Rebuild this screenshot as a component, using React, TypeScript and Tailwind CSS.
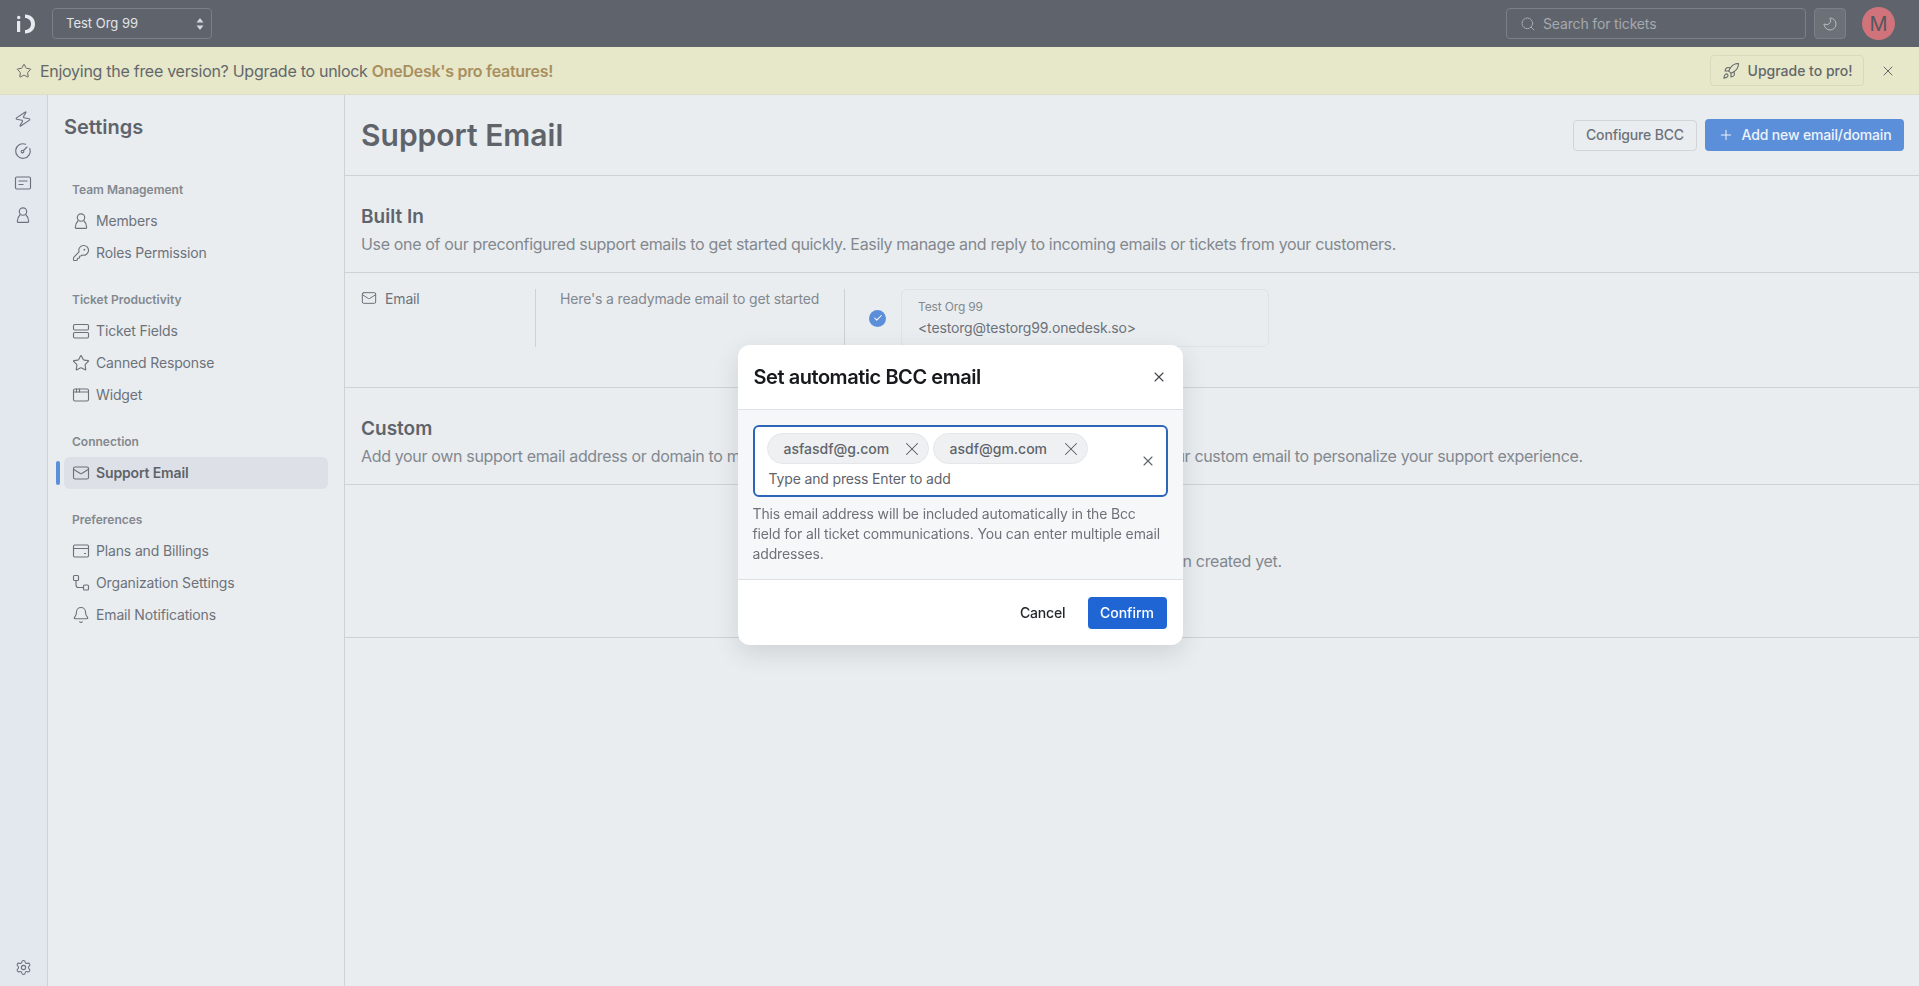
import React from "react";
import {
  AppWindow,
  Bell,
  KeyRound,
  Mail,
  Moon,
  Plus,
  Rocket,
  Search,
  Settings,
  Star,
  X,
  Zap,
  Check,
} from "lucide-react";

type IconProps = { className?: string };

const FieldsIcon = ({ className }: IconProps) => (
  <svg className={className} viewBox="0 0 18 18" fill="none" stroke="currentColor" strokeWidth="1.15">
    <rect x="1.5" y="2.5" width="15" height="5.5" rx="1.2" />
    <rect x="1.5" y="10.5" width="15" height="5.5" rx="1.2" />
  </svg>
);

const TicketIcon = ({ className }: IconProps) => (
  <svg className={className} viewBox="0 0 18 18" fill="none" stroke="currentColor" strokeWidth="1.15">
    <rect x="1.5" y="3" width="15" height="12" rx="1.2" />
    <path d="M4.500 7h9M4.500 10.500h5" />
  </svg>
);

const BillingIcon = ({ className }: IconProps) => (
  <svg className={className} viewBox="0 0 18 18" fill="none" stroke="currentColor" strokeWidth="1.15">
    <rect x="1.5" y="3" width="15" height="12" rx="1.2" />
    <path d="M1.500 6.500h15M12 11.500h2" />
  </svg>
);

const OrgIcon = ({ className }: IconProps) => (
  <svg className={className} viewBox="0 0 18 18" fill="none" stroke="currentColor" strokeWidth="1.15">
    <rect x="1.500" y="1.500" width="5" height="5" rx="1" />
    <rect x="11.500" y="11" width="5" height="5" rx="1" />
    <path d="M4 6.500v4.500a2.500 2.500 0 0 0 2.500 2.500h5" />
  </svg>
);

const PersonIcon = ({ className }: IconProps) => (
  <svg className={className} viewBox="0 0 18 18" fill="none" stroke="currentColor" strokeWidth="1.15" strokeLinejoin="round">
    <circle cx="9" cy="5.500" r="3.700" />
    <path d="M6.300 8.500C4.600 10 3.500 12.500 3.300 15.500c0 .5.300.8.800.8h9.800c.5 0 .8-.3.800-.8-.2-3-1.300-5.500-3-7" />
  </svg>
);

const GaugeIcon = ({ className }: IconProps) => (
  <svg className={className} viewBox="0 0 18 18" fill="none" stroke="currentColor" strokeWidth="1.15" strokeLinecap="round">
    <path d="M11.500 2.200A7.300 7.300 0 1 0 15.800 6.500" />
    <circle cx="8.500" cy="9.500" r="1.300" />
    <path d="M9.500 8.500l3.500-3.500" />
  </svg>
);

type NavItem = { label: string; icon: React.ReactNode; active?: boolean };

const iconClass = "h-[18px] w-[18px] shrink-0 text-[#6d727a]";
const thin = 1.5;

const groups: { title: string; items: NavItem[] }[] = [
  {
    title: "Team Management",
    items: [
      { label: "Members", icon: <PersonIcon className={iconClass} /> },
      { label: "Roles Permission", icon: <KeyRound className={iconClass} strokeWidth={thin} /> },
    ],
  },
  {
    title: "Ticket Productivity",
    items: [
      { label: "Ticket Fields", icon: <FieldsIcon className={iconClass} /> },
      { label: "Canned Response", icon: <Star className={iconClass} strokeWidth={thin} /> },
      { label: "Widget", icon: <AppWindow className={iconClass} strokeWidth={thin} /> },
    ],
  },
  {
    title: "Connection",
    items: [{ label: "Support Email", icon: <Mail className={iconClass} strokeWidth={thin} />, active: true }],
  },
  {
    title: "Preferences",
    items: [
      { label: "Plans and Billings", icon: <BillingIcon className={iconClass} /> },
      { label: "Organization Settings", icon: <OrgIcon className={iconClass} /> },
      { label: "Email Notifications", icon: <Bell className={iconClass} strokeWidth={thin} /> },
    ],
  },
];

const TopBar = () => (
  <header className="flex h-[47px] shrink-0 items-center bg-[#5f646c] pl-[17px] pr-6">
    <svg className="h-[20px] w-[19px] shrink-0" viewBox="0 0 19 20" fill="#e8eaed">
      <circle cx="1.700" cy="3.500" r="1.700" />
      <rect x="0" y="7" width="3.200" height="11" rx="0.500" />
      <path d="M8 .5c6 0 10 4 10 9.500s-4 9.500-10 9.500V16c3.500 0 6-2.500 6-6s-2.500-6-6-6z" />
    </svg>
    <div className="ml-4 flex h-[31px] w-[160px] items-center justify-between rounded border border-[#7b8088] pl-[13px] pr-[7px] text-[13px] tracking-normal text-[#e3e5e8]">
      <span>Test Org 99</span>
      <svg className="h-[14px] w-[8px]" viewBox="0 0 8 14" fill="#d5d8dc">
        <path d="M4 1l3.500 4.500h-7zM4 13L.5 8.500h7z" />
      </svg>
    </div>
    <div className="ml-auto flex h-[31px] w-[300px] items-center rounded border border-[#7b8088] pl-[13px] text-sm text-[#a5a9af]">
      <Search className="mr-[7px] h-[16px] w-[16px]" strokeWidth={1.5} />
      <span>Search for tickets</span>
    </div>
    <div className="ml-2 flex h-[31px] w-[32px] items-center justify-center rounded border border-[#7b8088] bg-[#6c7178] text-[#b8bbc0]">
      <Moon className="h-[16px] w-[16px] -scale-x-100" strokeWidth={1.5} />
    </div>
    <div className="ml-4 flex h-[33px] w-[33px] items-center justify-center rounded-full bg-[#d0737b] text-xl text-[#54585f]">
      M
    </div>
  </header>
);

const Banner = () => (
  <div className="flex h-[48px] shrink-0 items-center border-b border-[#dcdfc2] bg-[#e6e8c9] pl-4 pr-[23px]">
    <Star className="h-[16px] w-[16px] text-[#63676b]" strokeWidth={1.5} />
    <p className="ml-[8px] text-base tracking-[-0.28px] text-[#63676b]">
      Enjoying the free version? Upgrade to unlock{" "}
      <span className="font-semibold text-[#a98f5e]">OneDesk's pro features!</span>
    </p>
    <div className="ml-auto flex h-[31px] w-[154px] items-center justify-center gap-2 rounded border border-[#d7dabd] text-sm font-medium tracking-normal text-[#63676b]">
      <Rocket className="h-[18px] w-[18px]" strokeWidth={1.4} />
      <span>Upgrade to pro!</span>
    </div>
    <X className="ml-[16px] h-[16px] w-[16px] text-[#63676b]" strokeWidth={1.5} />
  </div>
);

const Rail = () => (
  <aside className="flex w-[48px] shrink-0 flex-col items-center border-r border-[#cdd2d8] bg-[#e3e7ee] pr-px pt-[8px] text-[#6d727a]">
    <div className="flex h-[32px] items-center">
      <Zap className="h-[18px] w-[18px] rotate-12" strokeWidth={1.5} />
    </div>
    <div className="flex h-[32px] items-center">
      <GaugeIcon className="h-[18px] w-[18px]" />
    </div>
    <div className="flex h-[32px] items-center">
      <TicketIcon className="h-[18px] w-[18px]" />
    </div>
    <div className="flex h-[32px] items-center">
      <PersonIcon className="h-[18px] w-[18px]" />
    </div>
    <div className="mt-auto mb-[10px] flex h-[18px] items-center">
      <Settings className="h-[17px] w-[17px]" strokeWidth={1.5} />
    </div>
  </aside>
);

const Sidebar = () => (
  <nav className="w-[297px] shrink-0 border-r border-[#cdd2d8] pl-[16px] pr-[16px] pt-[18px]">
    <h2 className="text-xl font-semibold leading-7 tracking-normal text-[#5f646b]">Settings</h2>
    <div className="mt-[34px] flex flex-col gap-4">
      {groups.map((group) => (
        <div key={group.title}>
          <div className="flex h-[30px] items-center pl-2 text-xs font-semibold tracking-normal text-[#83888f]">{group.title}</div>
          {group.items.map((item) => (
            <div
              key={item.label}
              className={`relative flex h-8 items-center gap-[6px] rounded-md pl-2 text-sm ${
                item.active ? "bg-[#dde1e7] font-semibold text-[#5f646b]" : "text-[#6d727a]"
              }`}
            >
              {item.active && <span className="absolute -left-2 top-1 h-6 w-1 rounded-sm bg-[#5c8fd9]" />}
              {item.icon}
              <span>{item.label}</span>
            </div>
          ))}
        </div>
      ))}
    </div>
  </nav>
);

const SectionHead = ({ title, text }: { title: string; text: string }) => (
  <div className="border-b border-[#cdd2d8] px-4 pb-4 pt-[27px]">
    <h3 className="text-[19px] font-semibold leading-7 tracking-normal text-[#5f646b]">{title}</h3>
    <p className="mt-px text-base tracking-[-0.34px] text-[#83888f]">{text}</p>
  </div>
);

const Main = () => (
  <main className="min-w-0 flex-1">
    <div className="flex h-[81px] items-center justify-between border-b border-[#cdd2d8] pl-4 pr-[15px]">
      <h1 className="text-3xl font-semibold tracking-normal text-[#5f646b]">Support Email</h1>
      <div className="flex items-center gap-2">
        <button className="h-[31px] w-[124px] rounded border border-[#d1d5db] text-sm font-medium text-[#6d727a]">
          Configure BCC
        </button>
        <button className="flex h-8 w-[199px] items-center justify-center gap-2 rounded bg-[#5c8fd9] text-sm font-medium text-[#eef3fb]">
          <Plus className="h-4 w-4" strokeWidth={1.5} />
          Add new email/domain
        </button>
      </div>
    </div>

    <SectionHead
      title="Built In"
      text="Use one of our preconfigured support emails to get started quickly. Easily manage and reply to incoming emails or tickets from your customers."
    />
    <div className="flex border-b border-[#cdd2d8] pb-10 pl-4 pt-4">
      <div className="flex h-[58px] w-[175px] items-start gap-2 border-r border-[#cdd2d8] text-sm text-[#6d727a]">
        <Mail className="mt-[1px] h-4 w-4 text-[#6d727a]" strokeWidth={1.5} />
        <span>Email</span>
      </div>
      <div className="h-[58px] w-[309px] border-r border-[#cdd2d8] pl-6 text-sm text-[#83888f]">
        Here's a readymade email to get started
      </div>
      <div className="flex items-center pl-6">
        <span className="flex h-[17px] w-[17px] items-center justify-center rounded-full bg-[#5c8fd9]">
          <Check className="h-[10px] w-[10px] text-white" strokeWidth={2.5} />
        </span>
        <div className="ml-[15px] flex h-[58px] w-[368px] flex-col justify-center gap-[2px] rounded-md border border-[#dfe3e7] pl-4">
          <span className="text-xs leading-[18px] text-[#83888f]">Test Org 99</span>
          <span className="text-sm leading-5 text-[#6d727a]">{"<testorg@testorg99.onedesk.so>"}</span>
        </div>
      </div>
    </div>

    <SectionHead
      title="Custom"
      text="Add your own support email address or domain to manage every customer reply. Then forward your emails to your custom email to personalize your support experience."
    />
    <div className="flex h-[153px] items-center justify-center border-b border-[#cdd2d8] text-base tracking-[-0.33px] text-[#83888f]">
      No custom emails have been created yet.
    </div>
  </main>
);

const Chip = ({ label, width }: { label: string; width: string }) => (
  <div className={`flex h-[31px] shrink-0 items-center justify-between rounded-full border border-[#e4e6e9] bg-[#eef0f2] pl-4 pr-[5px] ${width}`}>
    <span className="text-sm font-medium tracking-normal text-[#5f646b]">{label}</span>
    <X className="h-[22px] w-[22px] text-[#555a61]" strokeWidth={1.1} />
  </div>
);

const BccDialog = () => (
  <div className="fixed inset-0 flex items-center justify-center pl-px pt-[4px]">
    <div className="w-[445px] overflow-hidden rounded-xl bg-white shadow-[0_8px_24px_rgba(40,50,60,0.14)]">
      <div className="flex h-[64px] items-center justify-between pl-4 pr-[16px]">
        <h2 className="text-xl font-semibold tracking-[-0.45px] text-[#17191c]">Set automatic BCC email</h2>
        <X className="h-[16px] w-[16px] text-[#43474d]" strokeWidth={1.7} />
      </div>
      <div className="border-y border-[#dde0e4] bg-[#f6f7f9] px-[15px] py-[15px]">
        <div className="relative h-[72px] rounded-md border-2 border-[#2d66b9] bg-white pl-[12px] pt-[6px]">
          <div className="flex gap-[4px]">
            <Chip label="asfasdf@g.com" width="w-[162px]" />
            <Chip label="asdf@gm.com" width="w-[155px]" />
          </div>
          <div className="mt-[5px] pl-[2px] text-sm leading-5 text-[#5f646b]">Type and press Enter to add</div>
          <X className="absolute right-[10px] top-[26px] h-[16px] w-[16px] text-[#5f646b]" strokeWidth={1.7} />
        </div>
        <p className="mt-[7px] w-[408px] text-sm leading-5 text-[#6d727a]">
          This email address will be included automatically in the Bcc field for all ticket communications. You can
          enter multiple email addresses.
        </p>
      </div>
      <div className="flex h-[65px] items-center justify-end pr-4">
        <span className="mr-[22px] text-sm font-medium text-[#24272b]">Cancel</span>
        <button className="h-8 w-[79px] rounded bg-[#1f66d4] text-sm font-medium tracking-normal text-white">Confirm</button>
      </div>
    </div>
  </div>
);

export default function App() {
  return (
    <div className="flex h-screen flex-col overflow-hidden bg-[#e9edf0] font-['Inter',sans-serif] tracking-[-0.15px]">
      <TopBar />
      <Banner />
      <div className="flex min-h-0 flex-1">
        <Rail />
        <Sidebar />
        <Main />
      </div>
      <BccDialog />
    </div>
  );
}
